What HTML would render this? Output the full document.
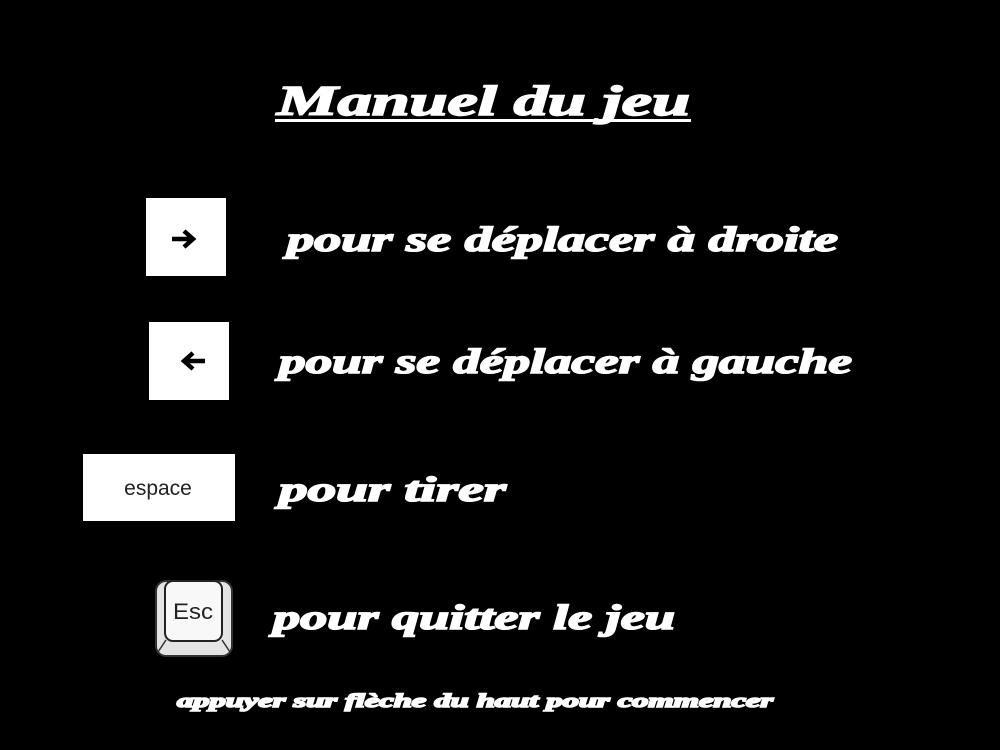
<!DOCTYPE html>
<html><head><meta charset="utf-8"><style>
html,body{margin:0;padding:0;background:#000;width:1000px;height:750px;overflow:hidden}
svg{display:block}
.t{font-family:"Liberation Serif",serif;font-weight:bold;font-style:italic;fill:#fff;stroke:#fff;stroke-width:1.6px}
</style></head><body>
<svg width="1000" height="750" viewBox="0 0 1000 750" xmlns="http://www.w3.org/2000/svg">
<rect width="1000" height="750" fill="#000"/>
<text class="t" x="277" y="115" font-size="42" textLength="413" lengthAdjust="spacingAndGlyphs">Manuel du jeu</text>
<rect x="275" y="119" width="416" height="3" fill="#fff"/>

<rect x="146" y="198" width="80" height="78" fill="#fff"/>
<path d="M172 239 H192 M184 231 L193 239 L184 247" stroke="#000" stroke-width="4.5" fill="none"/>
<text class="t" x="287" y="251" font-size="35" textLength="551" lengthAdjust="spacingAndGlyphs">pour se déplacer à droite</text>

<rect x="149" y="322" width="80" height="78" fill="#fff"/>
<path d="M205 361 H185 M193 353 L184 361 L193 369" stroke="#000" stroke-width="4.5" fill="none"/>
<text class="t" x="279" y="373" font-size="35" textLength="573" lengthAdjust="spacingAndGlyphs">pour se déplacer à gauche</text>

<rect x="83" y="454" width="152" height="67" fill="#fff"/>
<text x="158" y="495" font-family="Liberation Sans,sans-serif" font-size="21" fill="#222" text-anchor="middle">espace</text>
<text class="t" x="279" y="501" font-size="35" textLength="227" lengthAdjust="spacingAndGlyphs">pour tirer</text>

<rect x="156" y="581" width="76" height="75" rx="10" fill="#e4e4e4" stroke="#333" stroke-width="2"/>
<path d="M166 640 L158 652 M222 640 L230 652" stroke="#333" stroke-width="1.5"/>
<rect x="165" y="581" width="57" height="60" rx="8" fill="#f8f8f8" stroke="#222" stroke-width="2"/>
<text x="193" y="619" font-family="Liberation Sans,sans-serif" font-size="22" fill="#222" text-anchor="middle" textLength="40" lengthAdjust="spacingAndGlyphs">Esc</text>
<text class="t" x="273" y="629" font-size="35" textLength="402" lengthAdjust="spacingAndGlyphs">pour quitter le jeu</text>

<text class="t" x="177" y="707" font-size="19" stroke-width="0.9" textLength="596" lengthAdjust="spacingAndGlyphs">appuyer sur flèche du haut pour commencer</text>
</svg>
</body></html>
